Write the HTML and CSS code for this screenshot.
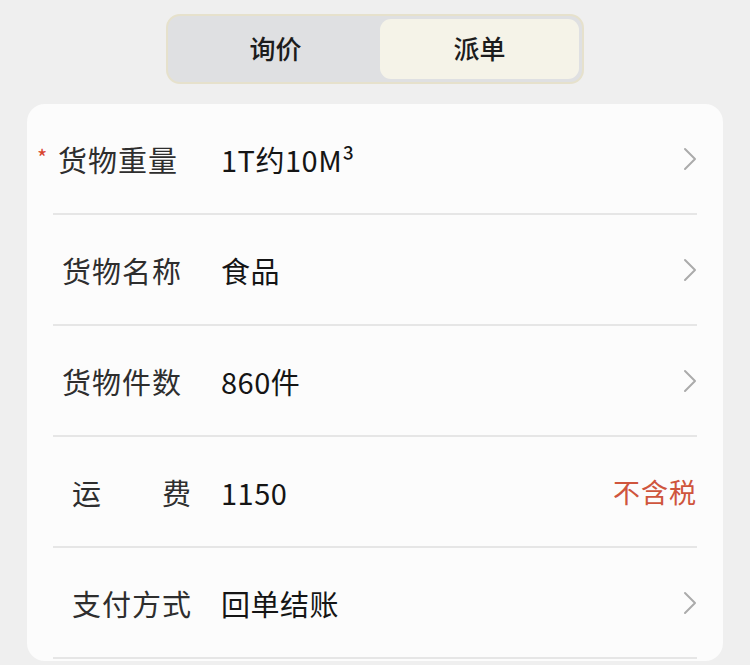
FILE: index.html
```html
<!DOCTYPE html>
<html lang="zh">
<head>
<meta charset="utf-8">
<link rel="stylesheet" href="styles.css">
</head>
<body>
<div class="seg">
  <div class="seg-item">询价</div>
  <div class="seg-item seg-item--active">派单</div>
</div>
<div class="card">
  <div class="row">
    <div class="label"><span class="req">*</span>货物重量</div>
    <div class="value">1T约10M³</div>
    <svg class="chev" viewBox="0 0 14 24"><path d="M2 2 L12 12 L2 22" fill="none" stroke="#ababab" stroke-width="2" stroke-linecap="round" stroke-linejoin="round"/></svg>
  </div>
  <div class="row">
    <div class="label label--mid">货物名称</div>
    <div class="value">食品</div>
    <svg class="chev" viewBox="0 0 14 24"><path d="M2 2 L12 12 L2 22" fill="none" stroke="#ababab" stroke-width="2" stroke-linecap="round" stroke-linejoin="round"/></svg>
  </div>
  <div class="row">
    <div class="label label--mid">货物件数</div>
    <div class="value">860件</div>
    <svg class="chev" viewBox="0 0 14 24"><path d="M2 2 L12 12 L2 22" fill="none" stroke="#ababab" stroke-width="2" stroke-linecap="round" stroke-linejoin="round"/></svg>
  </div>
  <div class="row">
    <div class="label label--inset label--justify"><span>运</span><span>费</span></div>
    <div class="value">1150</div>
    <div class="note">不含税</div>
  </div>
  <div class="row">
    <div class="label label--inset">支付方式</div>
    <div class="value">回单结账</div>
    <svg class="chev" viewBox="0 0 14 24"><path d="M2 2 L12 12 L2 22" fill="none" stroke="#ababab" stroke-width="2" stroke-linecap="round" stroke-linejoin="round"/></svg>
  </div>
</div>
</body>
</html>
```
FILE: styles.css
```css
html, body {
  margin: 0;
  padding: 0;
  background: #efefef;
  font-family: "Noto Sans CJK SC", "Noto Sans", sans-serif;
  height: 665px;
  overflow: hidden;
}

.seg {
  box-sizing: border-box;
  width: 418px;
  height: 70px;
  margin: 14px 0 0 166px;
  padding: 3px;
  border: 2px solid #e6e1cc;
  border-radius: 14px;
  background: #dfe0e2;
  display: flex;
}

.seg-item {
  flex: 1 1 0;
  display: flex;
  align-items: center;
  justify-content: center;
  font-size: 26px;
  font-weight: 500;
  color: #1c1c1c;
  border-radius: 11px;
  padding-bottom: 4px;
}

.seg-item:first-child {
  flex: 0 0 209px;
}

.seg-item--active {
  background: #f5f3e8;
}

.card {
  margin: 20px 0 0 27px;
  width: 696px;
  height: 557px;
  background: #fcfcfc;
  border-radius: 18px;
  padding: 0 26px;
  box-sizing: border-box;
}

.row {
  height: 111px;
  box-sizing: border-box;
  border-bottom: 2px solid #e6e6e6;
  display: flex;
  align-items: center;
}

.label {
  position: relative;
  box-sizing: border-box;
  width: 168px;
  padding-left: 5px;
  font-size: 29px;
  color: #2e2e2e;
  letter-spacing: 1px;
  white-space: nowrap;
}

.label--mid {
  padding-left: 9px;
}

.label--inset {
  padding-left: 19px;
}

.label--justify {
  display: flex;
  justify-content: space-between;
  padding-right: 29px;
}

.req {
  position: absolute;
  left: -16px;
  top: 2px;
  font-size: 22px;
  color: #d8452f;
}

.value {
  flex: 1;
  font-size: 29px;
  color: #151515;
  letter-spacing: 0.5px;
  white-space: nowrap;
}

.chev {
  width: 14px;
  height: 24px;
  flex: none;
}

.note {
  font-size: 27px;
  color: #cf553d;
  letter-spacing: 1px;
}
```
